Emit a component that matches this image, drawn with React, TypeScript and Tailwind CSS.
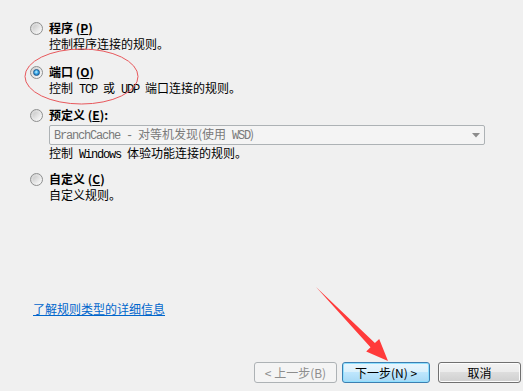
import React from "react";

const Radio = ({ checked }: { checked?: boolean }) => (
	<span className="flex h-[13px] w-[13px] shrink-0 items-center justify-center rounded-full border border-[#8e8f8f] bg-[linear-gradient(135deg,#cfcfcf,#fbfbfb)]">
		{checked ? (
			<span className="h-[7px] w-[7px] rounded-full border border-[#1c5a8f] bg-[radial-gradient(circle_at_45%_40%,#c6f4ff,#3aa8e8_45%,#0f5a9c)]" />
		) : (
			<span className="h-[7px] w-[7px] rounded-full bg-[linear-gradient(135deg,#c9c9c9,#f6f6f6)]" />
		)}
	</span>
);

// Latin runs in the old bitmap UI font are half-width and monospaced
const M = ({ children }: { children: React.ReactNode }) => (
	<span className="font-['Liberation_Mono',monospace] text-[12px] tracking-[-1.2px]">{children}</span>
);

const Label = ({ text, accel, tail, checked }: { text: string; accel: string; tail: string; checked?: boolean }) => (
	<div className="flex h-4 items-center gap-[6px]">
		<Radio checked={checked} />
		<span className="font-bold leading-4">
			{text}(<u>{accel}</u>{tail}
		</span>
	</div>
);

const App = () => {
	return (
		<div className="relative flex h-[391px] w-[523px] flex-col overflow-hidden bg-[#f0f0f0] font-['Noto_Sans_CJK_SC',sans-serif] text-[12px] text-black">
			{/* Rule types */}
			<div className="flex flex-col pl-[30px] pt-[20px]">
				<Label text="程序 " accel="P" tail=")" />
				<div className="ml-[19px] h-4 leading-4">控制程序连接的规则。</div>

				<div className="mt-[12px]">
					<Label text="端口 " accel="O" tail=")" checked />
				</div>
				<div className="ml-[19px] h-4 leading-4">
					控制<M> TCP </M>或<M> UDP </M>端口连接的规则。
				</div>

				<div className="mt-[11px]">
					<Label text="预定义 " accel="E" tail="):" />
				</div>
				<div className="ml-[19px] mt-[2px] flex h-[20px] w-[436px] items-center justify-between rounded-[2px] border border-[#adb2b5] bg-[#f4f4f4] pl-[4px] pr-[4px] text-[#7a7a7a]">
					<span className="leading-4">
						<M>BranchCache - </M>对等机发现(使用<M> WSD</M>)
					</span>
					<svg width="8" height="5" viewBox="0 0 8 5">
						<path d="M0 0 H8 L4 4.5 Z" fill="#8c8c8c" />
					</svg>
				</div>
				<div className="ml-[19px] h-4 leading-4">
					控制<M> Windows </M>体验功能连接的规则。
				</div>

				<div className="mt-[10px]">
					<Label text="自定义 " accel="C" tail=")" />
				</div>
				<div className="ml-[19px] h-4 leading-4">自定义规则。</div>
			</div>

			{/* Help link */}
			<div className="mt-auto h-4 pl-[33px] leading-4">
				<span className="text-[#0066cc] underline">了解规则类型的详细信息</span>
			</div>

			{/* Wizard buttons */}
			<div className="mt-[45px] flex pb-[8px] pl-[254px]">
				<button className="flex h-[21px] w-[83px] items-center justify-center rounded-[3px] border border-[#adb2b5] bg-[#f4f4f4] text-[#8d8d8d]">
					&lt; 上一步(B)
				</button>
				<button className="ml-[5px] flex h-[21px] w-[88px] items-center justify-center rounded-[3px] border border-[#3c7fb1] bg-[linear-gradient(#eaf6fd,#d9f0fc_50%,#bee6fd_50%,#a7d9f5)] shadow-[inset_0_0_0_1px_#8fe0ff]">
					下一步(N) &gt;
				</button>
				<button className="ml-[8px] flex h-[21px] w-[83px] items-center justify-center rounded-[3px] border border-[#707070] bg-[linear-gradient(#f2f2f2,#ebebeb_50%,#dddddd_50%,#cfcfcf)] shadow-[inset_0_0_0_1px_#fcfcfc]">
					取消
				</button>
			</div>

			{/* Annotation marks */}
			<svg className="pointer-events-none absolute inset-0" width="523" height="391" viewBox="0 0 523 391">
				<ellipse cx="81.5" cy="76.5" rx="56.5" ry="27.5" fill="none" stroke="#e8585c" strokeWidth="1" />
				<polygon
					points="316,287 374.9,343.1 379.2,338.9 388,361 366.2,351.5 370.5,347.3"
					fill="#ff3a3a"
				/>
			</svg>
		</div>
	);
};

export default App;
